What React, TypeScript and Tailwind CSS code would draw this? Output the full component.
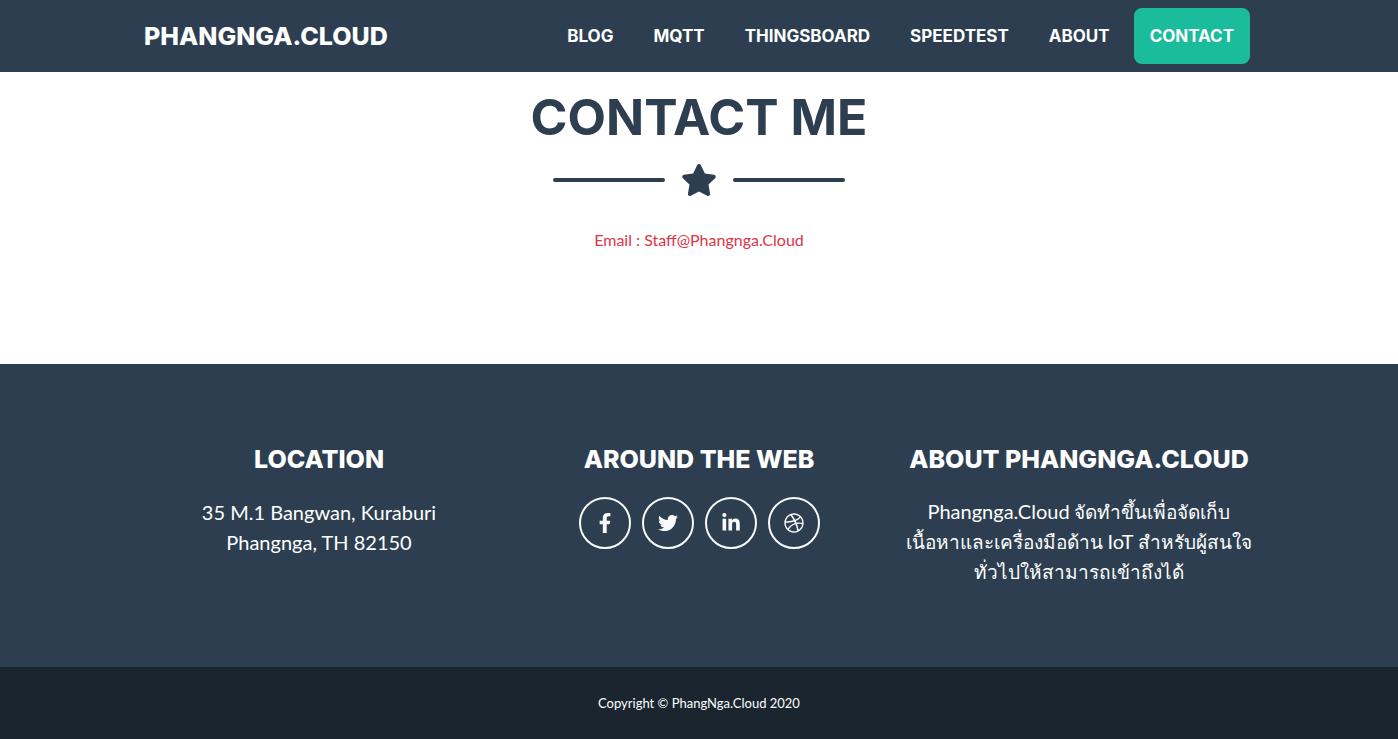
import { FaStar, FaFacebookF, FaTwitter, FaLinkedinIn, FaDribbble } from 'react-icons/fa';

const navLinks = ['Blog', 'MQTT', 'ThingsBoard', 'SpeedTest', 'About', 'Contact'];

const socials = [
  { label: 'Facebook', icon: FaFacebookF },
  { label: 'Twitter', icon: FaTwitter },
  { label: 'LinkedIn', icon: FaLinkedinIn },
  { label: 'Dribbble', icon: FaDribbble },
];

const heading = "font-['Inter',sans-serif] uppercase";
const footerHeading = `${heading} font-extrabold text-[25px] leading-[30px] mb-[23px] whitespace-nowrap`;

function Navbar() {
  return (
    <header className="bg-[#2c3e50] text-white">
      <div className="max-w-[1140px] mx-auto px-[15px] py-2 flex items-center justify-between">
        <a href="#top" className={`${heading} font-extrabold text-[25px] leading-9`}>Phangnga.Cloud</a>
        <nav>
          <ul className="flex">
            {navLinks.map(name => (
              <li key={name} className="mx-1">
                <a
                  href={`#${name.toLowerCase()}`}
                  className={`${heading} font-bold block p-4 text-[17px] leading-6 rounded-lg ${name === 'Contact' ? 'bg-[#1abc9c]' : ''}`}
                >
                  {name}
                </a>
              </li>
            ))}
          </ul>
        </nav>
      </div>
    </header>
  );
}

function Contact() {
  return (
    <section id="contact" className="px-4 pt-4 pb-28 text-center">
      <h1 className={`${heading} font-bold text-[50px] leading-[58px] text-[#2c3e50]`}>Contact Me</h1>
      <div className="flex items-center justify-center gap-4 mt-2.5 mb-6 h-12 text-[#2c3e50]">
        <span className="w-28 h-1 rounded-full bg-[#2c3e50]" />
        <FaStar className="w-9 h-8" />
        <span className="w-28 h-1 rounded-full bg-[#2c3e50]" />
      </div>
      <a href="mailto:staff@phangnga.cloud" className="block text-base text-[#dc3545]">
        Email : Staff@Phangnga.Cloud
      </a>
    </section>
  );
}

function Footer() {
  return (
    <footer className="text-white text-center">
      <div className="bg-[#2c3e50] py-20">
        <div className="max-w-[1140px] mx-auto grid grid-cols-3">
          <div className="px-[15px]">
            <h2 className={footerHeading}>Location</h2>
            <p className="text-xl leading-[30px]">
              35 M.1 Bangwan, Kuraburi
              <br />
              Phangnga, TH 82150
            </p>
          </div>
          <div className="px-[15px]">
            <h2 className={footerHeading}>Around the Web</h2>
            <div className="flex justify-center gap-[11px]">
              {socials.map(({ label, icon: Icon }) => (
                <a
                  key={label}
                  href={`#${label.toLowerCase()}`}
                  aria-label={label}
                  className="w-[52px] h-[52px] rounded-full border-2 border-[#f8f9fa] text-[#f8f9fa] flex items-center justify-center"
                >
                  <Icon className="w-5 h-5" />
                </a>
              ))}
            </div>
          </div>
          <div className="px-[15px]">
            <h2 className={footerHeading}>About Phangnga.Cloud</h2>
            <p lang="th" className="text-[19px] leading-[30px] whitespace-nowrap">
              <span className="text-xl leading-none">Phangnga.Cloud</span> จัดทำขึ้นเพื่อจัดเก็บ
              <br />
              เนื้อหาและเครื่องมือด้าน <span className="text-xl leading-none">IoT</span> สำหรับผู้สนใจ
              <br />
              ทั่วไปให้สามารถเข้าถึงได้
            </p>
          </div>
        </div>
      </div>
      <div className="bg-[#1a252f] py-6">
        <p className="text-[13px] leading-6">Copyright © PhangNga.Cloud 2020</p>
      </div>
    </footer>
  );
}

export default function App() {
  return (
    <div id="top" className="bg-white font-['Lato',sans-serif]">
      <Navbar />
      <Contact />
      <Footer />
    </div>
  );
}
